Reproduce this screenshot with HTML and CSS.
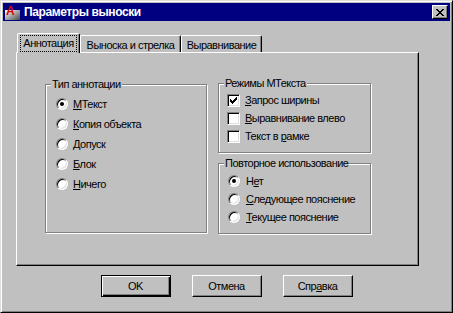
FILE: index.html
```html
<!DOCTYPE html>
<html lang="ru">
<head>
  <meta charset="UTF-8">
  <title>Параметры выноски</title>
  <link rel="stylesheet" href="styles.css">
</head>
<body>
  <div class="window">
    <div class="titlebar">
      <svg class="app-icon" viewBox="0 0 15 15" width="15" height="15">
        <defs>
          <linearGradient id="iconbox" x1="0" y1="0" x2="1" y2="1">
            <stop offset="0" stop-color="#ffffff"/>
            <stop offset="1" stop-color="#4a4a4a"/>
          </linearGradient>
        </defs>
        <rect x="0" y="5" width="15" height="10" fill="url(#iconbox)"/>
        <text x="5" y="10" text-anchor="middle" font-family="Liberation Sans" font-weight="bold" font-size="12" fill="#e00000">A</text>
      </svg>
      <span class="title">Параметры выноски</span>
      <button class="close-btn">
        <svg width="8" height="7" viewBox="0 0 8 7" shape-rendering="crispEdges">
          <path d="M0 0h2v1h-2z M6 0h2v1h-2z M1 1h2v1h-2z M5 1h2v1h-2z M2 2h2v1h-2z M4 2h2v1h-2z M3 3h2v1h-2z M2 4h2v1h-2z M4 4h2v1h-2z M1 5h2v1h-2z M5 5h2v1h-2z M0 6h2v1h-2z M6 6h2v1h-2z" fill="#000"/>
        </svg>
      </button>
    </div>

    <div class="dialog-body">
      <div class="tabs">
        <div class="tab tab-active tab-annot"><span class="focus">Аннотация</span></div>
        <div class="tab tab-leader">Выноска и стрелка</div>
        <div class="tab tab-align">Выравнивание</div>
      </div>

      <div class="tab-panel">
        <div class="group group-type">
          <div class="group-title">Тип аннотации</div>
          <div class="option-list">
            <div class="option"><span class="radio checked"></span><span><u>М</u>Текст</span></div>
            <div class="option"><span class="radio"></span><span><u>К</u>опия объекта</span></div>
            <div class="option"><span class="radio"></span><span><u>Д</u>опуск</span></div>
            <div class="option"><span class="radio"></span><span><u>Б</u>лок</span></div>
            <div class="option"><span class="radio"></span><span><u>Н</u>ичего</span></div>
          </div>
        </div>

        <div class="side">
          <div class="group group-mtext">
            <div class="group-title">Режимы МТекста</div>
            <div class="check-list">
              <div class="option option-sm">
                <span class="checkbox">
                  <svg width="7" height="7" viewBox="0 0 7 7" shape-rendering="crispEdges">
                    <path d="M6 0h1v1h-1z M5 1h2v1h-2z M0 2h1v1h-1z M4 2h3v1h-3z M0 3h2v1h-2z M3 3h3v1h-3z M0 4h5v1h-5z M1 5h3v1h-3z M2 6h1v1h-1z" fill="#000"/>
                  </svg>
                </span>
                <span><u>З</u>апрос ширины</span>
              </div>
              <div class="option option-sm"><span class="checkbox"></span><span><u>В</u>ыравнивание влево</span></div>
              <div class="option option-sm"><span class="checkbox"></span><span>Текст в <u>р</u>амке</span></div>
            </div>
          </div>

          <div class="group group-reuse">
            <div class="group-title">Повторное использование</div>
            <div class="reuse-list">
              <div class="option option-sm"><span class="radio checked"></span><span>Н<u>е</u>т</span></div>
              <div class="option option-sm"><span class="radio"></span><span><u>С</u>ледующее пояснение</span></div>
              <div class="option option-sm"><span class="radio"></span><span><u>Т</u>екущее пояснение</span></div>
            </div>
          </div>
        </div>
      </div>

      <div class="buttons">
        <button class="btn btn-default">OK</button>
        <button class="btn">Отмена</button>
        <button class="btn">Спр<u>а</u>вка</button>
      </div>
    </div>
  </div>
</body>
</html>
```

FILE: styles.css
```css
* {
  box-sizing: border-box;
}
body {
  margin: 0;
  background: #c0c0c0;
  font-family: "Liberation Sans", Arial, sans-serif;
  font-size: 11px;
  letter-spacing: -0.5px;
  color: #000;
}
.window {
  width: 453px;
  height: 313px;
  padding: 2px;
  background: #c0c0c0;
  border: 1px solid;
  border-color: #dfdfdf #000 #000 #dfdfdf;
  box-shadow: inset 1px 1px #fff, inset -1px -1px #808080;
}
.titlebar {
  display: flex;
  align-items: center;
  height: 18px;
  padding-left: 2px;
  background: #000080;
  color: #fff;
}
.app-icon {
  flex: none;
}
.title {
  margin-left: 4px;
  font-size: 12px;
  font-weight: bold;
  letter-spacing: -0.4px;
}
.close-btn {
  display: flex;
  align-items: center;
  justify-content: center;
  width: 16px;
  height: 14px;
  margin-left: auto;
  margin-right: 2px;
  padding: 0;
  background: #c0c0c0;
  border: 1px solid;
  border-color: #fff #000 #000 #fff;
  box-shadow: inset -1px -1px #808080;
}
.dialog-body {
  padding: 12px 0 0 13px;
}

/* tabs */
.tabs {
  position: relative;
  z-index: 1;
  display: flex;
  align-items: flex-end;
  height: 19px;
  padding-left: 1px;
}
.tab {
  display: flex;
  align-items: center;
  justify-content: center;
  height: 17px;
  padding-top: 1px;
  background: #c0c0c0;
  border: 1px solid;
  border-bottom: 0;
  border-color: #fff #000 #000 #fff;
  border-radius: 2px 2px 0 0;
  box-shadow: inset -1px 0 #808080;
  white-space: nowrap;
}
.tab-active {
  height: 20px;
  margin-bottom: -1px;
  padding-top: 0;
  padding-bottom: 1px;
}
.tab-annot { width: 63px; }
.tab-leader { width: 101px; }
.tab-align { width: 81px; }
.focus {
  padding: 1px 2px;
  line-height: 13px;
  outline: 1px dotted #000;
}
.tab-panel {
  display: flex;
  align-items: flex-start;
  width: 403px;
  height: 214px;
  padding: 31px 0 0 28px;
  border: 1px solid;
  border-color: #fff #000 #000 #fff;
  box-shadow: inset -1px -1px #808080;
}

/* group boxes */
.group {
  border: 1px solid #808080;
  box-shadow: inset 1px 1px #fff, 1px 1px #fff;
}
.group-title {
  display: table;
  margin: -7px 0 0 5px;
  padding: 0 1px;
  line-height: 13px;
  background: #c0c0c0;
}
.group-type {
  width: 162px;
  height: 149px;
}
.side {
  display: flex;
  flex-direction: column;
  gap: 10px;
  width: 153px;
  margin: -1px 0 0 11px;
}
.group-mtext { height: 70px; }
.group-reuse { height: 71px; }

.option-list {
  margin-top: 3px;
  padding-left: 10px;
}
.check-list {
  margin-top: 1px;
  padding-left: 8px;
}
.reuse-list {
  margin-top: 2px;
  padding-left: 9px;
}
.option {
  display: flex;
  align-items: center;
  gap: 5px;
  height: 20px;
  white-space: nowrap;
}
.option-sm {
  height: 18px;
}
.reuse-list .option {
  gap: 6px;
}
.radio {
  display: flex;
  align-items: center;
  justify-content: center;
  flex: none;
  width: 12px;
  height: 12px;
  background: #fff;
  border: 1px solid;
  border-color: #808080 #fff #fff #808080;
  border-radius: 50%;
  box-shadow: inset 1px 1px #000, inset -1px -1px #dfdfdf;
}
.radio.checked::after {
  content: "";
  width: 4px;
  height: 4px;
  border-radius: 50%;
  background: #000;
}
.checkbox {
  display: flex;
  align-items: center;
  justify-content: center;
  flex: none;
  width: 13px;
  height: 13px;
  background: #fff;
  border: 1px solid;
  border-color: #808080 #fff #fff #808080;
  box-shadow: inset 1px 1px #000, inset -1px -1px #dfdfdf;
}

/* buttons */
.buttons {
  display: flex;
  justify-content: center;
  gap: 21px;
  margin: 9px 0 0 -13px;
}
.btn {
  width: 70px;
  height: 22px;
  padding: 0;
  font-family: inherit;
  font-size: 11px;
  letter-spacing: -0.5px;
  color: #000;
  background: #c0c0c0;
  border: 1px solid;
  border-color: #fff #000 #000 #fff;
  box-shadow: inset -1px -1px #808080;
}
.btn-default {
  border-color: #000;
  box-shadow: inset 1px 1px #fff, inset -1px -1px #000, inset -2px -2px #808080;
}
```
